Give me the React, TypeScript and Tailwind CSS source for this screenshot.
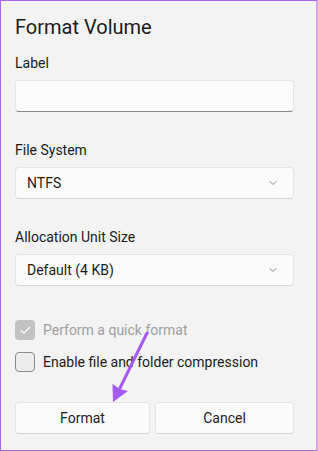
import { ChevronDown, Check } from "lucide-react";

function Select({ value }: { value: string }) {
  return (
    <div className="mt-[7px] h-8 w-full rounded-[4px] border border-[#e5e5e5] border-b-[#d6d6d6] bg-[#fbfbfb] flex items-center justify-between pl-[11px] pr-[14px]">
      <span className="text-[14px] text-[#1b1b1b]">{value}</span>
      <ChevronDown className="w-[12px] h-[12px] text-[#5f5f5f]" strokeWidth={1.5} />
    </div>
  );
}

export default function App() {
  return (
    <div
      className="relative w-[318px] h-[451px] bg-[#f3f3f3] border border-[#a66ae8] border-r-2 border-r-[#cfa4f6] pl-[14px] pr-[22px] pt-[12px]"
      style={{ fontFamily: 'Roboto, "Noto Sans", sans-serif' }}
    >
      <h1 className="text-[20px] leading-[28px] text-[#1b1b1b]">Format Volume</h1>

      <div className="mt-[12px] text-[14px] leading-[20px] text-[#1b1b1b]">Label</div>
      <div className="mt-[7px] h-8 w-full rounded-[4px] border border-[#e5e5e5] border-b-[#868686] bg-[#fcfcfc]" />

      <div className="mt-[28px] text-[14px] leading-[20px] text-[#1b1b1b]">File System</div>
      <Select value="NTFS" />

      <div className="mt-[28px] text-[14px] leading-[20px] text-[#1b1b1b]">Allocation Unit Size</div>
      <Select value="Default (4 KB)" />

      <div className="mt-[34px] flex items-center gap-[8px] h-5">
        <div className="w-5 h-5 rounded-[4px] bg-[#c2c2c2] flex items-center justify-center">
          <Check className="w-[13px] h-[13px] text-white" strokeWidth={2} />
        </div>
        <span className="text-[14px] leading-[20px] text-[#a0a0a0]">Perform a quick format</span>
      </div>
      <div className="mt-[12px] flex items-center gap-[8px] h-5">
        <div className="w-5 h-5 rounded-[4px] border border-[#8a8a8a] bg-[#ededed]" />
        <span className="text-[14px] leading-[20px] text-[#1b1b1b]">Enable file and folder compression</span>
      </div>

      <div className="mt-[30px] flex gap-[5px]">
        <button className="h-8 w-[135px] rounded-[4px] border border-[#e5e5e5] border-b-[#d3d3d3] bg-[#fbfbfb] text-[14px] text-[#1b1b1b]">
          Format
        </button>
        <button className="h-8 flex-1 rounded-[4px] border border-[#e5e5e5] border-b-[#d3d3d3] bg-[#fbfbfb] text-[14px] text-[#1b1b1b]">
          Cancel
        </button>
      </div>

      <svg className="absolute left-0 top-0 pointer-events-none" width="318" height="451" viewBox="0 0 318 451">
        <line x1="146" y1="332" x2="119" y2="387" stroke="#a55bf2" strokeWidth="3" strokeLinecap="round" />
        <polygon points="112,401 111.5,383 119,388 127,390" fill="#a55bf2" />
      </svg>
    </div>
  );
}
